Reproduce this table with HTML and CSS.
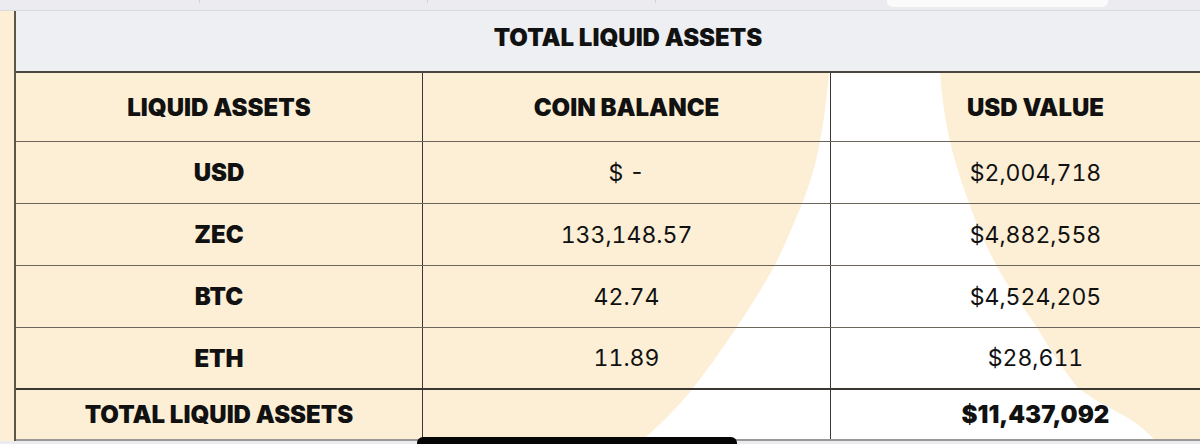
FILE: index.html
```html
<!DOCTYPE html>
<html>
<head>
<meta charset="utf-8">
<link rel="stylesheet" href="styles.css">
</head>
<body>
<div class="page">
  <svg class="backdrop" width="1200" height="444" viewBox="0 0 1200 444" aria-hidden="true">
    <rect x="0" y="0" width="1200" height="444" fill="#fcefd6"/>
    <path fill="#ffffff" d="M829,72 C826,110 821,140 815,165 C808,190 800,210 790,232 C778,262 764,285 748,310 C730,338 712,364 690,392 C672,414 652,432 636,446 L1160,446 C1148,432 1138,424 1128,418 C1110,408 1094,400 1078,388 C1060,366 1048,346 1036,326 C1026,312 1020,302 1014,294 C1000,274 990,254 980,232 C970,206 960,180 952,150 C946,126 942,100 940,72 Z"/>
  </svg>

  <div class="topbar">
    <span class="tick t1"></span>
    <span class="tick t2"></span>
    <span class="tick t3"></span>
    <span class="tab"></span>
  </div>

  <div class="sheet">
    <div class="gutter"></div>
    <div class="table">
      <div class="title">TOTAL LIQUID ASSETS</div>

      <div class="row head">
        <div class="cell">LIQUID ASSETS</div>
        <div class="cell">COIN BALANCE</div>
        <div class="cell">USD VALUE</div>
      </div>

      <div class="row">
        <div class="cell label">USD</div>
        <div class="cell">$ -</div>
        <div class="cell">$2,004,718</div>
      </div>

      <div class="row">
        <div class="cell label">ZEC</div>
        <div class="cell">133,148.57</div>
        <div class="cell">$4,882,558</div>
      </div>

      <div class="row">
        <div class="cell label">BTC</div>
        <div class="cell">42.74</div>
        <div class="cell">$4,524,205</div>
      </div>

      <div class="row last">
        <div class="cell label">ETH</div>
        <div class="cell">11.89</div>
        <div class="cell">$28,611</div>
      </div>

      <div class="row total">
        <div class="cell label">TOTAL LIQUID ASSETS</div>
        <div class="cell"></div>
        <div class="cell label">$11,437,092</div>
      </div>
    </div>
  </div>

  <div class="footer"></div>
  <div class="home-indicator"></div>
</div>
</body>
</html>
```

FILE: styles.css
```css
* { box-sizing: border-box; }

html, body {
  margin: 0;
  padding: 0;
  width: 1200px;
  height: 444px;
  overflow: hidden;
  background: #ececf0;
}

.page {
  position: relative;
  width: 1200px;
  height: 444px;
  overflow: hidden;
  font-family: "Inter", "Liberation Sans", sans-serif;
  color: #111111;
}

.backdrop {
  position: absolute;
  left: 0;
  top: 0;
  z-index: 0;
}

.topbar {
  position: relative;
  z-index: 1;
  height: 11px;
  background: #ececf0;
  border-bottom: 1px solid #d9d9de;
  display: flex;
}

.tick {
  position: absolute;
  top: 0;
  width: 1px;
  height: 3px;
  background: #d2d2d7;
}
.t1 { left: 199px; }
.t2 { left: 427px; }
.t3 { left: 655px; }

.tab {
  margin-left: 887px;
  width: 221px;
  height: 7px;
  background: #fbfbfc;
  border-radius: 0 0 6px 6px;
}

.sheet {
  position: relative;
  z-index: 1;
  display: flex;
  width: 1240px;
}

.gutter {
  width: 16px;
  flex: none;
  background: #fcefd6;
  border-right: 2px solid #5c5549;
}

.table {
  width: 1224px;
  flex: none;
  display: flex;
  flex-direction: column;
}

.title {
  height: 62px;
  background: #eeeff2;
  border-bottom: 2px solid #4a453e;
  display: flex;
  justify-content: center;
  align-items: flex-start;
  padding-top: 12px;
  font-size: 24px;
  font-weight: 900;
  line-height: 29px;
}

.row {
  display: grid;
  grid-template-columns: 407px 408px 409px;
  height: 62px;
  border-bottom: 1px solid #6b655c;
}

.row .cell {
  display: flex;
  align-items: center;
  justify-content: center;
  font-size: 23px;
  font-weight: 400;
  font-feature-settings: "tnum" 1;
  border-right: 1px solid #3b3833;
}
.row .cell:last-child { border-right: none; }

.row.head { height: 69px; }
.row.head .cell {
  font-size: 24px;
  font-weight: 900;
  font-feature-settings: normal;
}

.row .cell.label {
  font-size: 24px;
  font-weight: 900;
  font-feature-settings: normal;
}

.row.last {
  border-bottom: 2px solid #3a3631;
}

.row.total {
  height: 51px;
  border-bottom: 2px solid #9a9894;
}

.footer {
  position: relative;
  z-index: 1;
  height: 20px;
  background: #ececf0;
}

.home-indicator {
  position: absolute;
  z-index: 2;
  left: 417px;
  top: 437px;
  width: 320px;
  height: 12px;
  border-radius: 6px;
  background: #050505;
}
```
